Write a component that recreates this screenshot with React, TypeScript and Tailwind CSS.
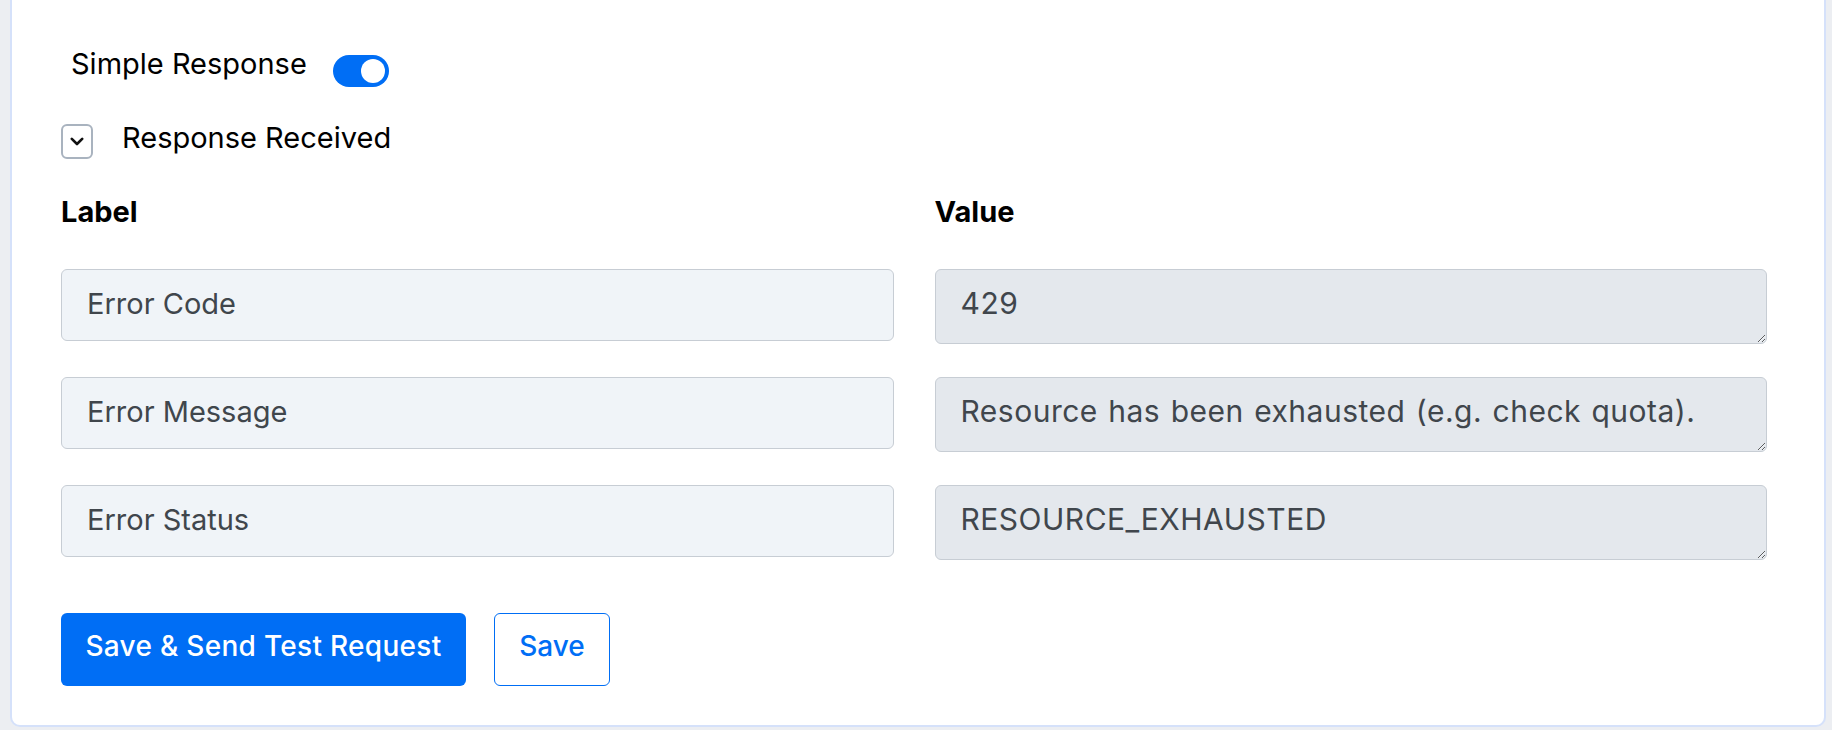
import React from "react";

const font = { fontFamily: "Inter, 'Noto Sans', sans-serif" };

type Row = { label: string; value: string };

const rows: Row[] = [
  { label: "Error Code", value: "429" },
  { label: "Error Message", value: "Resource has been exhausted (e.g. check quota)." },
  { label: "Error Status", value: "RESOURCE_EXHAUSTED" },
];

function Toggle() {
  return (
    <div className="relative h-[32px] w-[56px] rounded-full bg-[#006ef5]">
      <div className="absolute right-[4px] top-[4px] h-[24px] w-[24px] rounded-full bg-white" />
    </div>
  );
}

function CollapseBox() {
  return (
    <div className="flex h-[35px] w-[32px] items-center justify-center rounded-[6px] border-2 border-[#a9b3bf] bg-white">
      <svg width="14" height="9" viewBox="0 0 14 9" fill="none">
        <path d="M1.8 1.8 L7 7 L12.2 1.8" stroke="#111" strokeWidth="2.6" strokeLinecap="round" strokeLinejoin="round" />
      </svg>
    </div>
  );
}

export default function App() {
  return (
    <div className="min-h-screen bg-[#eceef2] pl-[10px] pr-[6px]" style={font}>
      <div className="h-[727px] rounded-b-[10px] border-x-2 border-b-2 border-[#d5e1fa] bg-white pl-[49px]">
        <div className="flex items-start gap-[26px] pl-[10px] pt-[47px]">
          <span className="text-[29px] leading-[34px] text-black">Simple Response</span>
          <div className="mt-[8px]">
            <Toggle />
          </div>
        </div>

        <div className="mt-[34px] flex items-start gap-[29px]">
          <div className="mt-[3px]">
            <CollapseBox />
          </div>
          <span className="text-[29px] leading-[34px] text-black">Response Received</span>
        </div>

        <div className="mt-[36px] grid w-[1706px] grid-cols-2 gap-x-[41px]">
          <div className="text-[29px] font-bold leading-[34px] text-black">Label</div>
          <div className="text-[29px] font-bold leading-[34px] text-black">Value</div>
        </div>

        <div className="mt-[40px] grid w-[1706px] grid-cols-2 items-start gap-x-[41px] gap-y-[33px]">
          {rows.map((r) => (
            <React.Fragment key={r.label}>
              <input
                readOnly
                value={r.label}
                className="h-[72px] w-full rounded-[6px] border border-[#c7cdd4] bg-[#f0f4f8] pb-[4px] pl-[25px] text-[29px] leading-[36px] text-[#40464c] outline-none"
                style={font}
              />
              <textarea
                readOnly
                value={r.value}
                className="h-[75px] w-full rounded-[6px] border border-[#c7cdd4] bg-[#e4e8ed] pl-[25px] pt-[15px] text-[30px] leading-[36px] tracking-[0.5px] [word-spacing:1.5px] text-[#40464c] outline-none"
                style={font}
              />
            </React.Fragment>
          ))}
        </div>

        <div className="mt-[53px] flex items-start gap-[28px]">
          <button
            className="h-[73px] w-[405px] rounded-[6px] bg-[#006ef5] pb-[8px] text-[28px] font-medium leading-[36px] tracking-[0.3px] text-white"
            style={font}
          >
            Save &amp; Send Test Request
          </button>
          <button
            className="h-[73px] w-[116px] rounded-[6px] border-[1.5px] border-[#006ef5] bg-white pb-[8px] text-[28px] font-medium leading-[36px] text-[#006ef5]"
            style={font}
          >
            Save
          </button>
        </div>
      </div>
    </div>
  );
}
